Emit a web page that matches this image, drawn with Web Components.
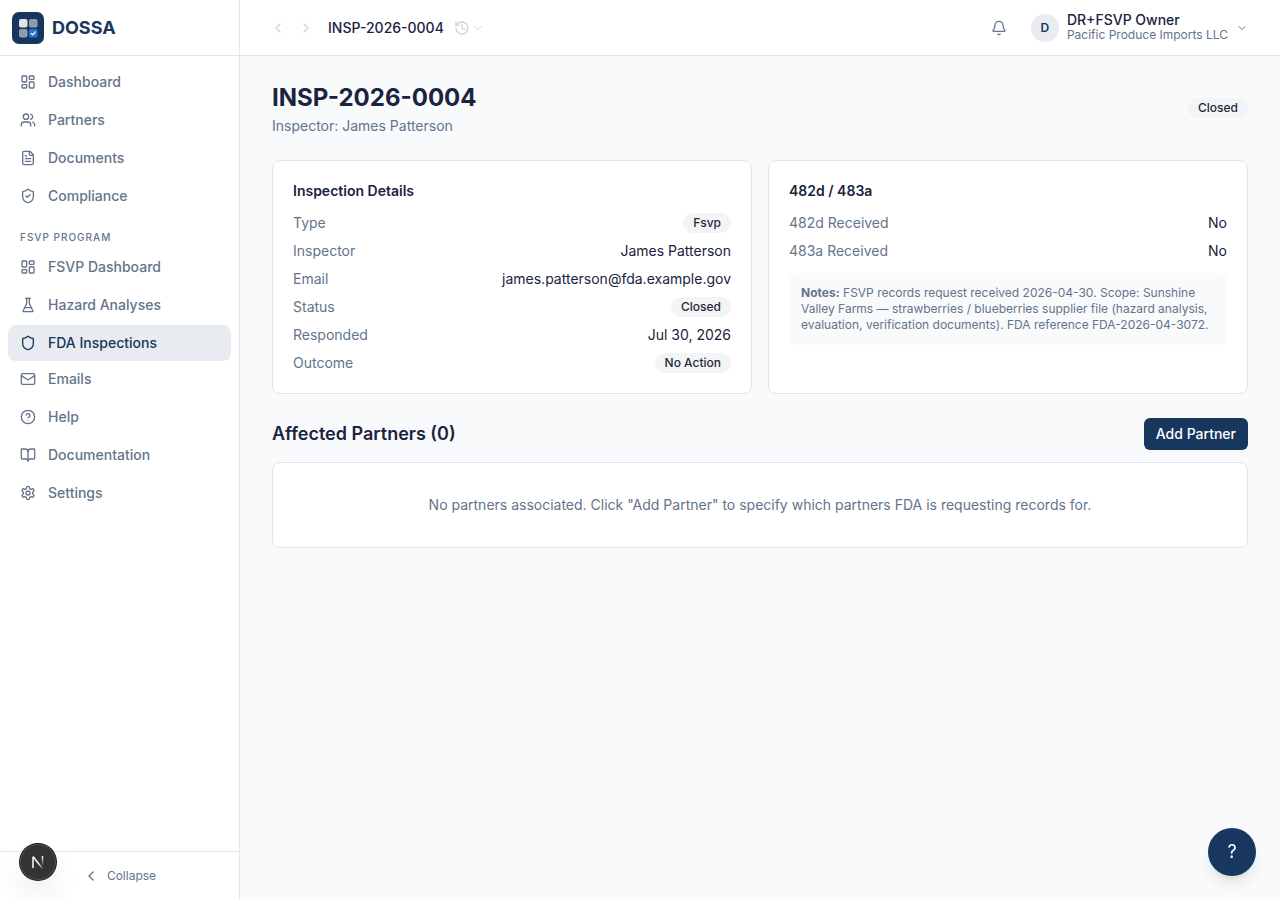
<!DOCTYPE html>
<html lang="en">
<head>
<meta charset="utf-8">
<meta name="viewport" content="width=device-width, initial-scale=1">
<title>INSP-2026-0004 - DOSSA</title>
<style>
:root{
    --primary:#17375e;
    --text:#1a2340;
    --muted:#64748b;
    --border:#e0e6f0;
    --surface:#f9fafc;
    --tint:#e8ebef;
}

body{
    margin:0;
    font-family:Inter, 'Liberation Sans', sans-serif;
    font-size:14px;
    line-height:20px;
    color:var(--text);
    background:var(--surface);
}
</style>
</head>
<body>

<d-app>
    <d-sidebar slot="sidebar">
        <d-nav-item icon="dashboard">Dashboard</d-nav-item>
        <d-nav-item icon="users">Partners</d-nav-item>
        <d-nav-item icon="file">Documents</d-nav-item>
        <d-nav-item icon="shield-check">Compliance</d-nav-item>
        <d-nav-group label="FSVP PROGRAM">
            <d-nav-item icon="dashboard">FSVP Dashboard</d-nav-item>
            <d-nav-item icon="flask">Hazard Analyses</d-nav-item>
            <d-nav-item icon="shield" active>FDA Inspections</d-nav-item>
        </d-nav-group>
        <d-nav-item icon="mail">Emails</d-nav-item>
        <d-nav-item icon="help">Help</d-nav-item>
        <d-nav-item icon="book">Documentation</d-nav-item>
        <d-nav-item icon="settings">Settings</d-nav-item>
    </d-sidebar>

    <d-topbar slot="topbar" initial="D">
        <span slot="title">INSP-2026-0004</span>
        <span slot="user">DR+FSVP Owner</span>
        <span slot="company">Pacific Produce Imports LLC</span>
    </d-topbar>

    <d-page-header>
        <span slot="title">INSP-2026-0004</span>
        <span slot="subtitle">Inspector: James Patterson</span>
        <d-badge>Closed</d-badge>
    </d-page-header>

    <d-columns>
        <d-card>
            <span slot="title">Inspection Details</span>
            <d-row label="Type"><d-badge>Fsvp</d-badge></d-row>
            <d-row label="Inspector">James Patterson</d-row>
            <d-row label="Email">james.patterson@fda.example.gov</d-row>
            <d-row label="Status"><d-badge>Closed</d-badge></d-row>
            <d-row label="Responded">Jul 30, 2026</d-row>
            <d-row label="Outcome"><d-badge>No Action</d-badge></d-row>
        </d-card>
        <d-card>
            <span slot="title">482d / 483a</span>
            <d-row label="482d Received">No</d-row>
            <d-row label="483a Received">No</d-row>
            <d-notes slot="footer"><strong>Notes:</strong> FSVP records request received 2026-04-30. Scope: Sunshine Valley Farms — strawberries / blueberries supplier file (hazard analysis, evaluation, verification documents). FDA reference FDA-2026-04-3072.</d-notes>
        </d-card>
    </d-columns>

    <d-partners count="0">
        No partners associated. Click "Add Partner" to specify which partners FDA is requesting records for.
    </d-partners>
</d-app>

<d-help-button></d-help-button>
<d-dev-badge></d-dev-badge>

<script>
const ICONS = {
    dashboard: '<rect width="7" height="9" x="3" y="3" rx="1"/><rect width="7" height="5" x="14" y="3" rx="1"/><rect width="7" height="9" x="14" y="12" rx="1"/><rect width="7" height="5" x="3" y="16" rx="1"/>',
    users: '<path d="M16 21v-2a4 4 0 0 0-4-4H6a4 4 0 0 0-4 4v2"/><circle cx="9" cy="7" r="4"/><path d="M22 21v-2a4 4 0 0 0-3-3.87"/><path d="M16 3.13a4 4 0 0 1 0 7.75"/>',
    file: '<path d="M15 2H6a2 2 0 0 0-2 2v16a2 2 0 0 0 2 2h12a2 2 0 0 0 2-2V7Z"/><path d="M14 2v4a2 2 0 0 0 2 2h4"/><path d="M10 9H8"/><path d="M16 13H8"/><path d="M16 17H8"/>',
    shield: '<path d="M20 13c0 5-3.5 7.5-7.66 8.95a1 1 0 0 1-.67-.01C7.5 20.5 4 18 4 13V6a1 1 0 0 1 1-1c2 0 4.5-1.2 6.24-2.72a1.17 1.17 0 0 1 1.52 0C14.51 3.81 17 5 19 5a1 1 0 0 1 1 1z"/>',
    flask: '<path d="M10 2v7.527a2 2 0 0 1-.211.896L4.72 20.55a1 1 0 0 0 .9 1.45h12.76a1 1 0 0 0 .9-1.45l-5.069-10.127A2 2 0 0 1 14 9.527V2"/><path d="M8.5 2h7"/><path d="M7 16h10"/>',
    mail: '<rect width="20" height="16" x="2" y="4" rx="2"/><path d="m22 7-8.97 5.7a1.94 1.94 0 0 1-2.06 0L2 7"/>',
    help: '<circle cx="12" cy="12" r="10"/><path d="M9.09 9a3 3 0 0 1 5.83 1c0 2-3 3-3 3"/><path d="M12 17h.01"/>',
    book: '<path d="M12 7v14"/><path d="M3 18a1 1 0 0 1-1-1V4a1 1 0 0 1 1-1h5a4 4 0 0 1 4 4 4 4 0 0 1 4-4h5a1 1 0 0 1 1 1v13a1 1 0 0 1-1 1h-6a3 3 0 0 0-3 3 3 3 0 0 0-3-3z"/>',
    settings: '<path d="M12.22 2h-.44a2 2 0 0 0-2 2v.18a2 2 0 0 1-1 1.73l-.43.25a2 2 0 0 1-2 0l-.15-.08a2 2 0 0 0-2.73.73l-.22.38a2 2 0 0 0 .73 2.73l.15.1a2 2 0 0 1 1 1.72v.51a2 2 0 0 1-1 1.74l-.15.09a2 2 0 0 0-.73 2.73l.22.38a2 2 0 0 0 2.73.73l.15-.08a2 2 0 0 1 2 0l.43.25a2 2 0 0 1 1 1.73V20a2 2 0 0 0 2 2h.44a2 2 0 0 0 2-2v-.18a2 2 0 0 1 1-1.73l.43-.25a2 2 0 0 1 2 0l.15.08a2 2 0 0 0 2.73-.73l.22-.39a2 2 0 0 0-.73-2.73l-.15-.08a2 2 0 0 1-1-1.74v-.5a2 2 0 0 1 1-1.74l.15-.09a2 2 0 0 0 .73-2.73l-.22-.38a2 2 0 0 0-2.73-.73l-.15.08a2 2 0 0 1-2 0l-.43-.25a2 2 0 0 1-1-1.73V4a2 2 0 0 0-2-2z"/><circle cx="12" cy="12" r="3"/>',
    bell: '<path d="M10.268 21a2 2 0 0 0 3.464 0"/><path d="M3.262 15.326A1 1 0 0 0 4 17h16a1 1 0 0 0 .74-1.673C19.41 13.956 18 12.499 18 8A6 6 0 0 0 6 8c0 4.499-1.411 5.956-2.738 7.326"/>',
    history: '<path d="M3 12a9 9 0 1 0 9-9 9.75 9.75 0 0 0-6.74 2.74L3 8"/><path d="M3 3v5h5"/><path d="M12 7v5l4 2"/>',
    left: '<path d="m15 18-6-6 6-6"/>',
    right: '<path d="m9 18 6-6-6-6"/>',
    down: '<path d="m6 9 6 6 6-6"/>'
};
ICONS['shield-check'] = ICONS.shield + '<path d="m9 12 2 2 4-4"/>';

function icon(name, size = 16){
    return `<svg width="${size}" height="${size}" viewBox="0 0 24 24" fill="none" stroke="currentColor" stroke-width="2" stroke-linecap="round" stroke-linejoin="round" aria-hidden="true">${ICONS[name]}</svg>`;
}

// shared by every element
const BASE = `
    *{ box-sizing:border-box; }
    svg{ display:block; flex:none; }
    h1, h2, h3, p, dl, dd{ margin:0; }
    button{
        margin:0;
        padding:0;
        border:0;
        background:none;
        font:inherit;
        color:inherit;
        cursor:pointer;
    }
`;

class DElement extends HTMLElement{

    constructor(){
        super();
        this.shadow = this.attachShadow({mode:'open'});
    }

    connectedCallback(){
        this.shadow.innerHTML = `<style>${BASE}</style>` + this.render();
    }

}

class DApp extends DElement{

    render(){
        return `
        <style>
        :host{
            display:grid;
            grid-template-columns:240px minmax(0, 1fr);
            min-height:100vh;
        }

        main{
            display:flex;
            flex-direction:column;
            gap:24px;
            padding:24px 32px;
        }
        </style>
        <slot name="sidebar"></slot>
        <div>
            <slot name="topbar"></slot>
            <main><slot></slot></main>
        </div>
        `;
    }

}

class DSidebar extends DElement{

    render(){
        return `
        <style>
        :host{
            display:flex;
            flex-direction:column;
            box-sizing:border-box;
            position:sticky;
            top:0;
            height:100vh;
            background:white;
            border-right:1px solid var(--border);
        }

        .brand{
            display:flex;
            align-items:center;
            gap:8px;
            height:56px;
            padding:0 12px;
            border-bottom:1px solid var(--border);
            font-size:18px;
            line-height:28px;
            font-weight:700;
            color:var(--primary);
            text-decoration:none;
        }

        nav{
            flex:1;
            display:flex;
            flex-direction:column;
            gap:2px;
            padding:8px;
            overflow-y:auto;
        }

        .collapse{
            display:flex;
            align-items:center;
            justify-content:center;
            gap:8px;
            height:49px;
            border-top:1px solid var(--border);
            font-size:12px;
            line-height:16px;
            color:var(--muted);
        }
        </style>
        <a class="brand" href="#">
            <svg width="32" height="32" viewBox="0 0 32 32" aria-hidden="true">
                <rect width="32" height="32" rx="7" fill="#17375e"/>
                <rect x="7" y="7" width="8.5" height="8.5" rx="2" fill="#dfe3e9"/>
                <rect x="17" y="7" width="8.5" height="8.5" rx="2" fill="#8f9db1"/>
                <rect x="7" y="17" width="8.5" height="8.5" rx="2" fill="#8f9db1"/>
                <rect x="17" y="17" width="8.5" height="8.5" rx="2" fill="#2574d4"/>
                <path d="m19.2 21.4 1.5 1.4 2.7-3" fill="none" stroke="white" stroke-width="1.2" stroke-linecap="round" stroke-linejoin="round"/>
            </svg>
            <span>DOSSA</span>
        </a>
        <nav><slot></slot></nav>
        <button class="collapse" type="button">${icon('left')}<span>Collapse</span></button>
        `;
    }

}

class DNavGroup extends DElement{

    render(){
        return `
        <style>
        :host{
            display:flex;
            flex-direction:column;
            gap:2px;
            margin:-2px 0;
        }

        h3{
            padding:16px 12px 2px;
            font-size:10px;
            line-height:15px;
            font-weight:500;
            letter-spacing:1px;
            color:var(--muted);
        }
        </style>
        <h3>${this.getAttribute('label')}</h3>
        <slot></slot>
        `;
    }

}

class DNavItem extends DElement{

    render(){
        const active = this.hasAttribute('active');
        return `
        <style>
        :host{
            display:block;
        }

        a{
            display:flex;
            align-items:center;
            gap:12px;
            padding:8px 12px;
            border-radius:8px;
            font-weight:500;
            color:var(--muted);
            text-decoration:none;
        }

        a.active{
            color:var(--primary);
            background:var(--tint);
        }
        </style>
        <a href="#" ${active ? 'class="active" aria-current="page"' : ''}>
            ${icon(this.getAttribute('icon'))}
            <slot></slot>
        </a>
        `;
    }

}

class DTopbar extends DElement{

    render(){
        return `
        <style>
        :host{
            display:flex;
            align-items:center;
            justify-content:space-between;
            box-sizing:border-box;
            height:56px;
            padding:0 32px 0 24px;
            background:white;
            border-bottom:1px solid var(--border);
        }

        .left, .right, .user{
            display:flex;
            align-items:center;
        }

        .step{
            padding:6px;
            color:var(--muted);
        }

        .step:disabled, .history{
            opacity:.3;
            cursor:default;
        }

        .title{
            margin:0 10px 0 8px;
            font-weight:500;
        }

        .history{
            display:flex;
            align-items:center;
            gap:2px;
            color:var(--muted);
        }

        .right{
            gap:24px;
            color:var(--muted);
        }

        .user{
            gap:8px;
            text-align:left;
        }

        .avatar{
            display:grid;
            place-items:center;
            width:28px;
            height:28px;
            border-radius:50%;
            background:var(--tint);
            color:var(--primary);
            font-size:12px;
            font-weight:600;
        }

        .name, .company{
            display:block;
        }

        .name{
            line-height:14px;
            font-weight:500;
            color:var(--text);
        }

        .company{
            font-size:12px;
            line-height:16px;
        }
        </style>
        <div class="left">
            <button class="step" type="button" aria-label="Back" disabled>${icon('left')}</button>
            <button class="step" type="button" aria-label="Forward" disabled>${icon('right')}</button>
            <span class="title"><slot name="title"></slot></span>
            <button class="history" type="button" aria-label="History" disabled>${icon('history')}${icon('down', 12)}</button>
        </div>
        <div class="right">
            <button type="button" aria-label="Notifications">${icon('bell')}</button>
            <button class="user" type="button">
                <span class="avatar">${this.getAttribute('initial')}</span>
                <span>
                    <span class="name"><slot name="user"></slot></span>
                    <span class="company"><slot name="company"></slot></span>
                </span>
                ${icon('down', 12)}
            </button>
        </div>
        `;
    }

}

class DPageHeader extends DElement{

    render(){
        return `
        <style>
        :host{
            display:flex;
            align-items:center;
            justify-content:space-between;
        }

        h1{
            font-size:24px;
            line-height:36px;
            font-weight:700;
        }

        p{
            color:var(--muted);
        }
        </style>
        <div>
            <h1><slot name="title"></slot></h1>
            <p><slot name="subtitle"></slot></p>
        </div>
        <slot></slot>
        `;
    }

}

class DBadge extends DElement{

    render(){
        return `
        <style>
        :host{
            display:block;
            padding:2px 10px;
            border-radius:10px;
            background:#f3f4f6;
            color:#1f2937;
            font-size:12px;
            line-height:16px;
            font-weight:500;
        }
        </style>
        <slot></slot>
        `;
    }

}

class DColumns extends DElement{

    render(){
        return `
        <style>
        :host{
            display:grid;
            grid-template-columns:repeat(auto-fit, minmax(320px, 1fr));
            gap:16px;
        }
        </style>
        <slot></slot>
        `;
    }

}

class DCard extends DElement{

    render(){
        return `
        <style>
        :host{
            display:flex;
            flex-direction:column;
            gap:12px;
            box-sizing:border-box;
            padding:20px;
            border:1px solid var(--border);
            border-radius:8px;
            background:white;
        }

        h3{
            font-size:14px;
            line-height:20px;
            font-weight:600;
        }

        .rows{
            display:flex;
            flex-direction:column;
            gap:8px;
        }
        </style>
        <h3><slot name="title"></slot></h3>
        <div class="rows"><slot></slot></div>
        <slot name="footer"></slot>
        `;
    }

}

class DRow extends DElement{

    render(){
        return `
        <style>
        :host{
            display:block;
        }

        dl{
            display:flex;
            align-items:center;
            justify-content:space-between;
            gap:16px;
        }

        dt{
            color:var(--muted);
        }
        </style>
        <dl>
            <dt>${this.getAttribute('label')}</dt>
            <dd><slot></slot></dd>
        </dl>
        `;
    }

}

class DNotes extends DElement{

    render(){
        return `
        <style>
        :host{
            display:block;
            padding:12px;
            border-radius:6px;
            background:var(--surface);
            color:var(--muted);
            font-size:12px;
            line-height:16px;
        }
        </style>
        <slot></slot>
        `;
    }

}

class DPartners extends DElement{

    render(){
        return `
        <style>
        :host{
            display:flex;
            flex-direction:column;
            gap:12px;
        }

        .head{
            display:flex;
            align-items:center;
            justify-content:space-between;
        }

        h2{
            font-size:18px;
            line-height:28px;
            font-weight:600;
        }

        button{
            padding:6px 12px;
            border-radius:6px;
            background:var(--primary);
            color:white;
            font-weight:500;
        }

        .empty{
            padding:32px;
            border:1px solid var(--border);
            border-radius:8px;
            background:white;
            color:var(--muted);
            text-align:center;
        }
        </style>
        <div class="head">
            <h2>Affected Partners (${this.getAttribute('count')})</h2>
            <button type="button">Add Partner</button>
        </div>
        <p class="empty"><slot></slot></p>
        `;
    }

}

class DHelpButton extends DElement{

    render(){
        return `
        <style>
        :host{
            position:fixed;
            right:24px;
            bottom:24px;
        }

        button{
            display:block;
            width:48px;
            height:48px;
            border-radius:50%;
            background:var(--primary);
            color:white;
            font-size:18px;
            line-height:28px;
            box-shadow:0 10px 15px -3px rgba(0,0,0,.1), 0 4px 6px -4px rgba(0,0,0,.1);
        }
        </style>
        <button type="button" aria-label="Open help">?</button>
        `;
    }

}

class DDevBadge extends DElement{

    render(){
        return `
        <style>
        :host{
            position:fixed;
            left:20px;
            bottom:20px;
        }

        button{
            display:grid;
            place-items:center;
            width:36px;
            height:36px;
            border-radius:50%;
            background:#333;
            box-shadow:0 0 0 1px #171717, inset 0 0 0 1px #4d4d4d, 0 16px 32px -8px rgba(0,0,0,.24);
        }
        </style>
        <button type="button" aria-label="Developer tools">
            <svg width="14" height="14" viewBox="0 0 14 14" fill="none" stroke-width="1.5" aria-hidden="true">
                <defs>
                    <linearGradient id="bar" gradientUnits="userSpaceOnUse" x1="0" y1="1" x2="0" y2="11">
                        <stop stop-color="white"/>
                        <stop offset="1" stop-color="white" stop-opacity="0"/>
                    </linearGradient>
                    <linearGradient id="slash" gradientUnits="userSpaceOnUse" x1="8" y1="8" x2="13" y2="14">
                        <stop stop-color="white"/>
                        <stop offset="1" stop-color="white" stop-opacity="0"/>
                    </linearGradient>
                </defs>
                <path d="M2 13V2" stroke="white"/>
                <path d="M2 1.5 11.6 13.6" stroke="url(#slash)"/>
                <path d="M11.5 1v10" stroke="url(#bar)"/>
            </svg>
        </button>
        `;
    }

}

customElements.define('d-app', DApp);
customElements.define('d-sidebar', DSidebar);
customElements.define('d-nav-group', DNavGroup);
customElements.define('d-nav-item', DNavItem);
customElements.define('d-topbar', DTopbar);
customElements.define('d-page-header', DPageHeader);
customElements.define('d-badge', DBadge);
customElements.define('d-columns', DColumns);
customElements.define('d-card', DCard);
customElements.define('d-row', DRow);
customElements.define('d-notes', DNotes);
customElements.define('d-partners', DPartners);
customElements.define('d-help-button', DHelpButton);
customElements.define('d-dev-badge', DDevBadge);
</script>
</body>
</html>
